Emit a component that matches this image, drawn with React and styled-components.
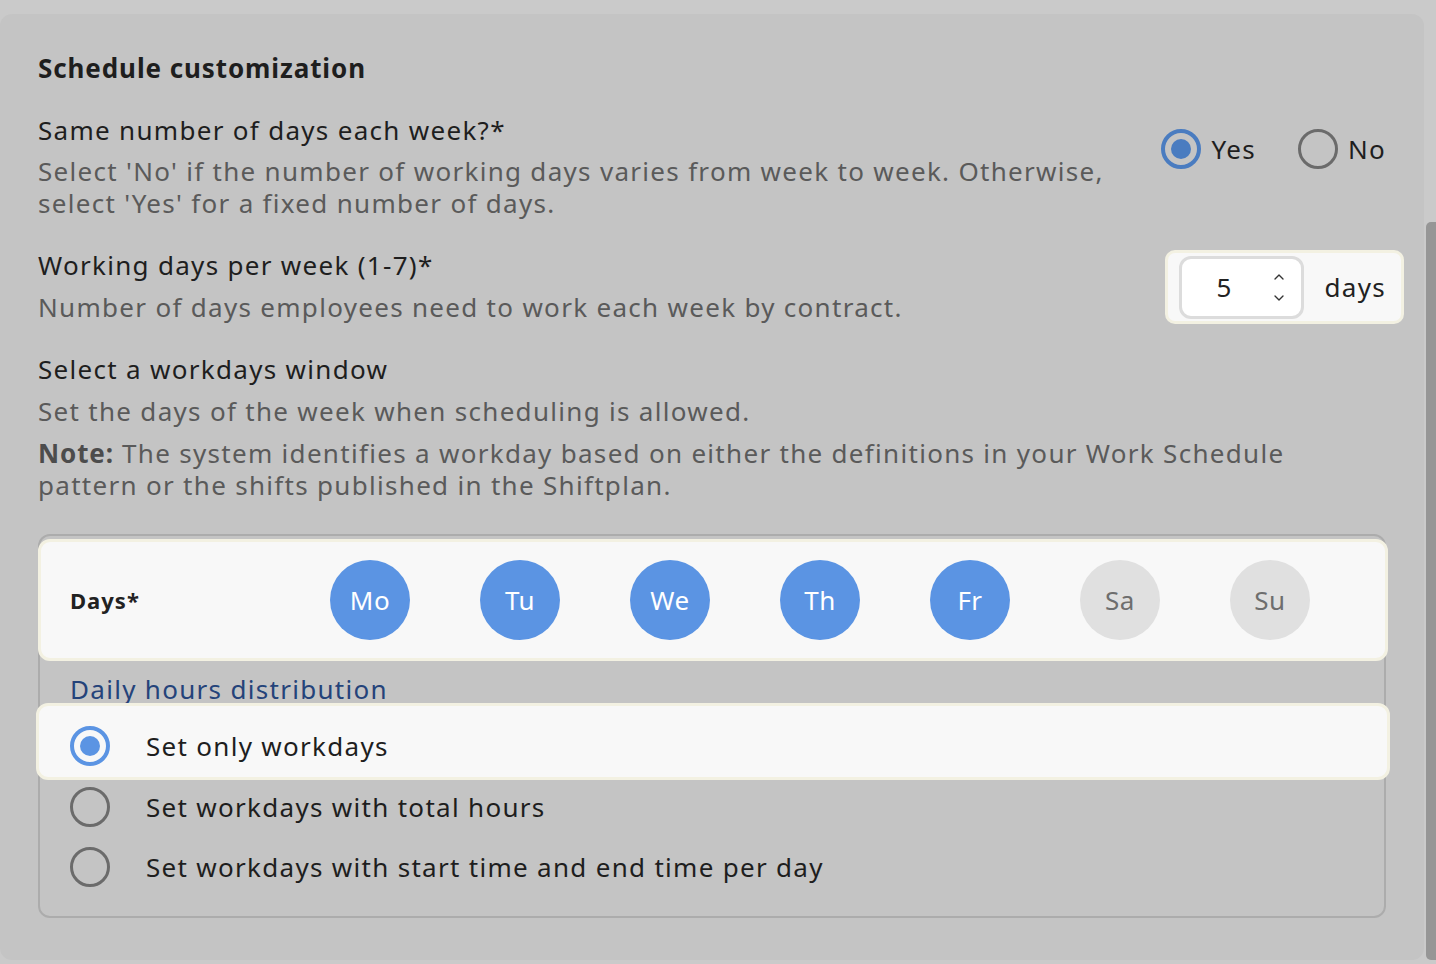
import React from 'react'
import styled, { createGlobalStyle } from 'styled-components'
import { ChevronUp, ChevronDown } from 'lucide-react'

const DAYS = [
  { short: 'Mo', on: true },
  { short: 'Tu', on: true },
  { short: 'We', on: true },
  { short: 'Th', on: true },
  { short: 'Fr', on: true },
  { short: 'Sa', on: false },
  { short: 'Su', on: false },
]

const GlobalStyle = createGlobalStyle`
  html, body {
    margin: 0;
    padding: 0;
    background: #cacaca;
  }
  body {
    font-family: "Noto Sans", "Open Sans", sans-serif;
    letter-spacing: 1.3px;
    color: #1e1e1e;
  }
`

const Radio = ({ checked, tone }) => (
  <RadioRing $checked={checked} $tone={tone}>
    {checked && <RadioDot $tone={tone} />}
  </RadioRing>
)

const App = () => {
  return (
    <>
      <GlobalStyle />
      <Page>
        <Panel>
          <Title>Schedule customization</Title>

          {/* same number of days */}
          <QuestionRow $mt={26}>
            <div>
              <Label>Same number of days each week?*</Label>
              <Desc>
                Select 'No' if the number of working days varies from week to week. Otherwise,
                <br />
                select 'Yes' for a fixed number of days.
              </Desc>
            </div>
            <RadioGroup>
              <RadioOption>
                <Radio checked tone="#4a7cc0" />
                <OptionText>Yes</OptionText>
              </RadioOption>
              <RadioOption>
                <Radio />
                <OptionText>No</OptionText>
              </RadioOption>
            </RadioGroup>
          </QuestionRow>

          {/* working days per week */}
          <QuestionRow $mt={27} $center>
            <div>
              <Label>Working days per week (1-7)*</Label>
              <Desc $mt={8}>Number of days employees need to work each week by contract.</Desc>
            </div>
            <StepperSpot>
              <Stepper>
                <StepValue>5</StepValue>
                <Arrows>
                  <ChevronUp size={16} strokeWidth={2} />
                  <ChevronDown size={16} strokeWidth={2} />
                </Arrows>
              </Stepper>
              <Unit>days</Unit>
            </StepperSpot>
          </QuestionRow>

          {/* workdays window */}
          <Label $mt={27}>Select a workdays window</Label>
          <Desc $mt={8}>Set the days of the week when scheduling is allowed.</Desc>
          <Desc $mt={10}>
            <NoteLead>Note:</NoteLead> The system identifies a workday based on either the definitions in your Work Schedule
            <br />
            pattern or the shifts published in the Shiftplan.
          </Desc>

          <Box>
            <DaysRow>
              <DaysLabel>Days*</DaysLabel>
              <DayList>
                {DAYS.map(d => (
                  <DayCircle key={d.short} $on={d.on}>{d.short}</DayCircle>
                ))}
              </DayList>
            </DaysRow>

            <BoxHeading>Daily hours distribution</BoxHeading>

            <SpotOption>
              <Radio checked tone="#5b94e3" />
              <OptionLabel>Set only workdays</OptionLabel>
            </SpotOption>
            <Option>
              <Radio />
              <OptionLabel>Set workdays with total hours</OptionLabel>
            </Option>
            <Option>
              <Radio />
              <OptionLabel>Set workdays with start time and end time per day</OptionLabel>
            </Option>
          </Box>
        </Panel>

        <ScrollTrack>
          <ScrollThumb />
        </ScrollTrack>
      </Page>
    </>
  )
}

const Page = styled.div`
  display: flex;
  height: 964px;
  padding-top: 14px;
  box-sizing: border-box;
  overflow: hidden;
`

const Panel = styled.div`
  flex: 1;
  height: 946px;
  box-sizing: border-box;
  padding: 36px 38px 0 38px;
  background: #c4c4c4;
  border-radius: 12px;
`

const Title = styled.h2`
  margin: 0;
  font-size: 26px;
  line-height: 36px;
  font-weight: 700;
  letter-spacing: 0.9px;
  color: #1e1e1e;
`

const QuestionRow = styled.div`
  display: flex;
  justify-content: space-between;
  align-items: ${p => (p.$center ? 'center' : 'flex-start')};
  margin-top: ${p => p.$mt || 0}px;
`

const Label = styled.div`
  font-size: 26px;
  line-height: 36px;
  color: #1e1e1e;
  margin-top: ${p => p.$mt || 0}px;
`

const Desc = styled.div`
  font-size: 26px;
  line-height: 32px;
  color: #5a5a5a;
  margin-top: ${p => (p.$mt === undefined ? 7 : p.$mt)}px;
`

const NoteLead = styled.b`
  font-weight: 700;
  letter-spacing: 0.9px;
  color: #4c4c4c;
`

const RadioGroup = styled.div`
  display: flex;
  gap: 42px;
  padding-top: 17px;
`

const RadioOption = styled.label`
  display: flex;
  align-items: center;
  gap: 10px;
`

const OptionText = styled.span`
  font-size: 26px;
  line-height: 36px;
  color: #1e1e1e;
`

const RadioRing = styled.span`
  flex-shrink: 0;
  width: 40px;
  height: 40px;
  box-sizing: border-box;
  border-radius: 50%;
  border: ${p => (p.$checked ? `4px solid ${p.$tone}` : '3.5px solid #6b6b6b')};
  display: flex;
  align-items: center;
  justify-content: center;
`

const RadioDot = styled.span`
  width: 20px;
  height: 20px;
  border-radius: 50%;
  background: ${p => p.$tone};
`

const StepperSpot = styled.div`
  display: flex;
  align-items: center;
  gap: 21px;
  height: 74px;
  box-sizing: border-box;
  margin: 4px -18px 0 0;
  padding: 0 15px 0 11px;
  background: #f8f8f8;
  border: 3px solid #f3f1e2;
  border-radius: 10px;
`

const Stepper = styled.div`
  display: flex;
  align-items: center;
  width: 125px;
  height: 63px;
  box-sizing: border-box;
  padding: 0 14px 0 35px;
  background: #ffffff;
  border: 3px solid #dcdcdc;
  border-radius: 12px;
`

const StepValue = styled.span`
  flex: 1;
  font-size: 26px;
  color: #222;
`

const Arrows = styled.span`
  display: flex;
  flex-direction: column;
  align-items: center;
  gap: 5px;
  color: #333;
`

const Unit = styled.span`
  font-size: 26px;
  color: #222;
`

const Box = styled.div`
  margin-top: 33px;
  border: 2px solid #acacac;
  border-radius: 12px;
  padding-bottom: 19px;
`

const DaysRow = styled.div`
  display: flex;
  align-items: center;
  height: 122px;
  box-sizing: border-box;
  margin: 3px -4px 0 -2px;
  padding-left: 29px;
  background: #f8f8f8;
  border: 3px solid #f3f1e2;
  border-radius: 12px;
`

const DaysLabel = styled.div`
  width: 260px;
  flex-shrink: 0;
  font-size: 22px;
  font-weight: 700;
  letter-spacing: 1px;
  color: #222;
`

const DayList = styled.div`
  display: flex;
  gap: 70px;
`

const DayCircle = styled.div`
  width: 80px;
  height: 80px;
  border-radius: 50%;
  display: flex;
  align-items: center;
  justify-content: center;
  font-size: 26px;
  letter-spacing: 0.5px;
  background: ${p => (p.$on ? '#5b94e3' : '#e0e0e0')};
  color: ${p => (p.$on ? '#ffffff' : '#6e6e6e')};
`

const BoxHeading = styled.div`
  margin: 12px 0 -2px 30px;
  font-size: 26px;
  line-height: 32px;
  color: #24437a;
`

const SpotOption = styled.div`
  position: relative;
  display: flex;
  align-items: center;
  gap: 36px;
  margin: 0 -6px -3px -4px;
  padding: 20px 0 11px 31px;
  background: #f8f8f8;
  border: 3px solid #f3f1e2;
  border-radius: 12px;
`

const Option = styled.div`
  display: flex;
  align-items: center;
  gap: 36px;
  height: 60px;
  padding-left: 30px;
`

const OptionLabel = styled.span`
  font-size: 26px;
  line-height: 36px;
  color: #1e1e1e;
`

const ScrollTrack = styled.div`
  width: 12px;
  display: flex;
  padding: 208px 0 4px 2px;
  box-sizing: border-box;
`

const ScrollThumb = styled.div`
  flex: 1;
  background: #969696;
  border-radius: 5px 0 0 5px;
`

export default App
